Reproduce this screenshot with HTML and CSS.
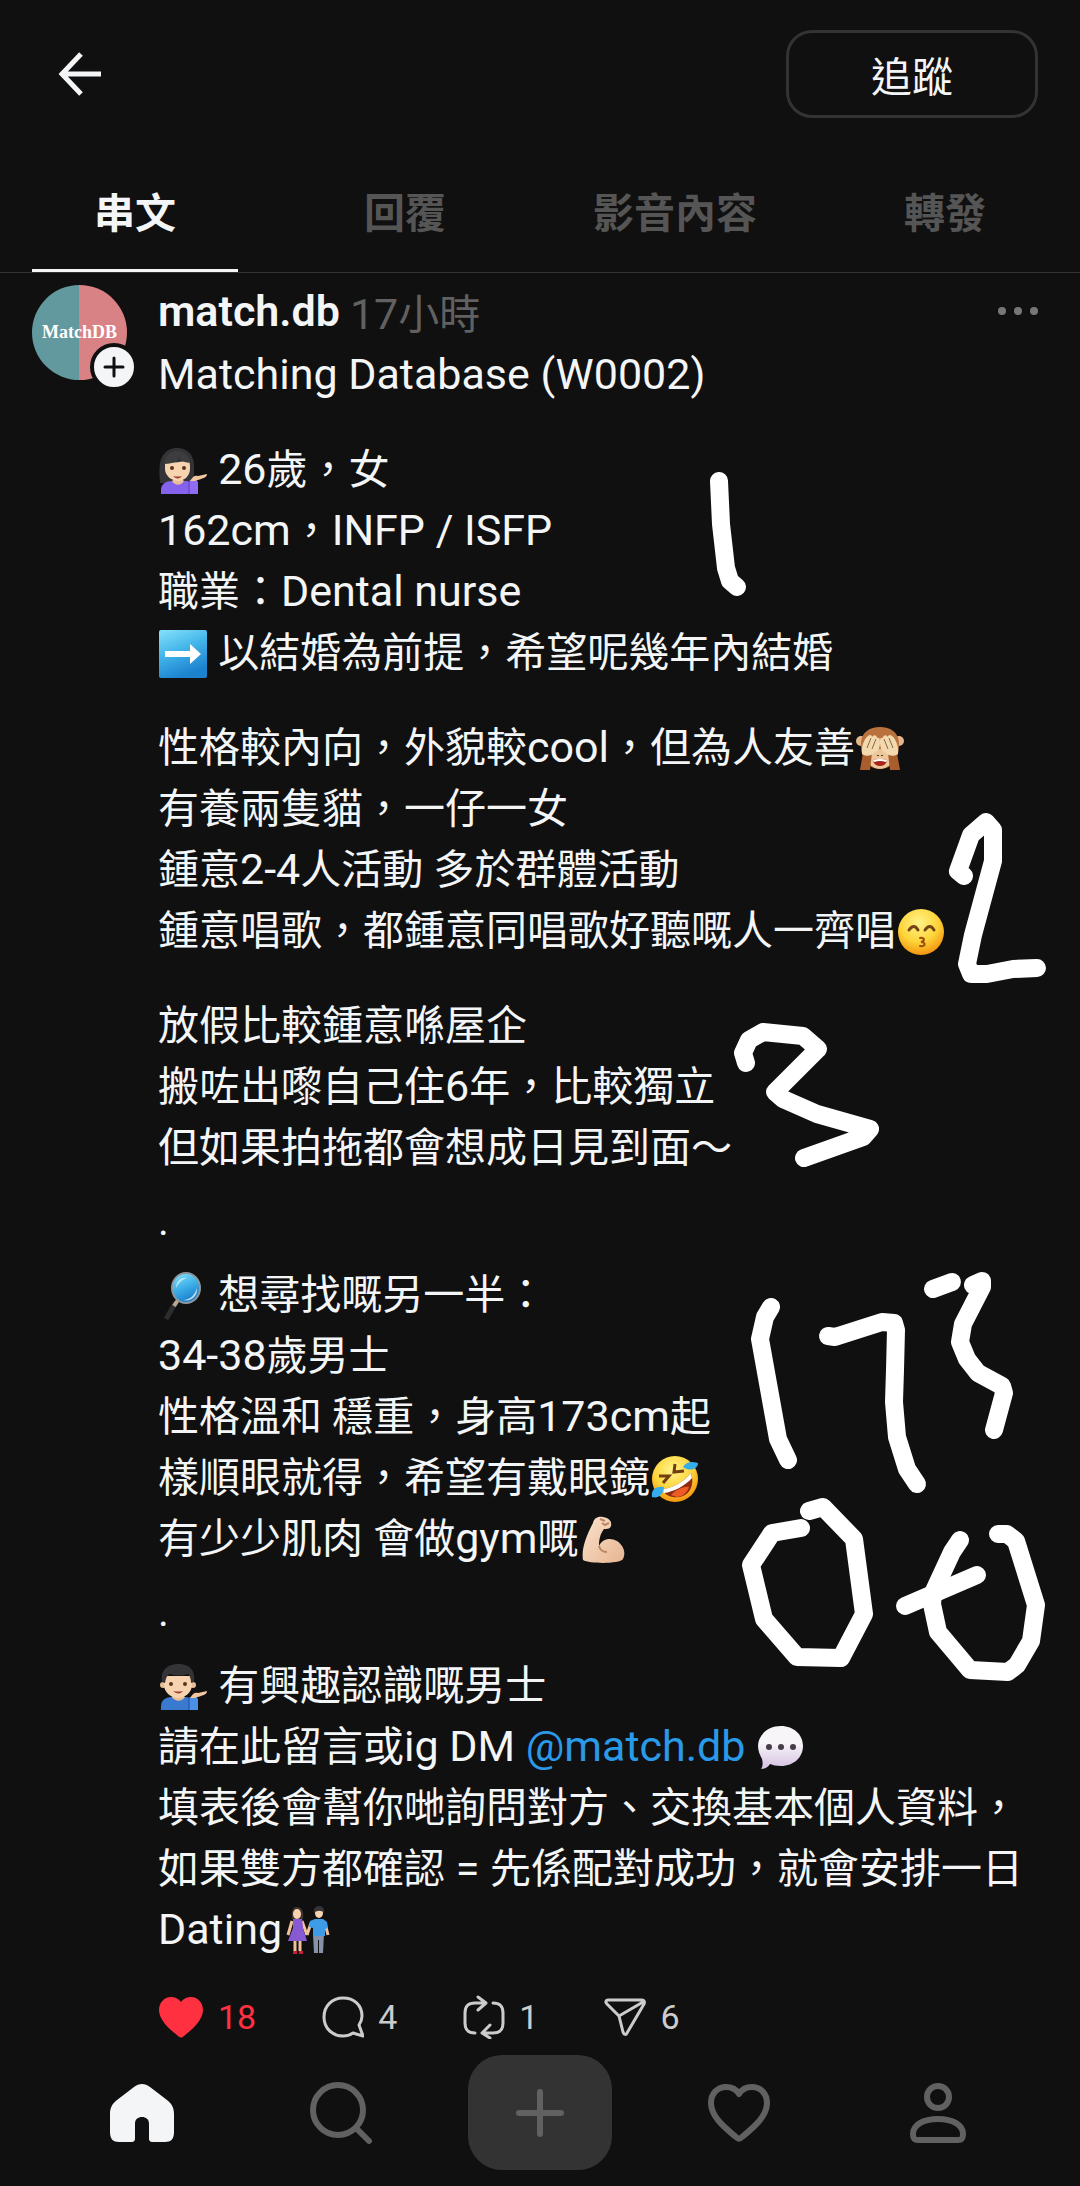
FILE: index.html
```html
<!DOCTYPE html>
<html lang="zh-Hant">
<head>
    <meta charset="UTF-8">
    <meta name="viewport" content="width=device-width, initial-scale=1.0">
    <title>match.db</title>
    <link rel="stylesheet" href="styles.css">
</head>
<body>
    <div class="page">
        <header class="top">
            <button class="back" type="button" aria-label="返回">
                <svg width="44" height="44" viewBox="0 0 44 44" fill="none" stroke="currentColor" stroke-width="5">
                    <path d="M23 2 4 22l19 20M4 22h39"/>
                </svg>
            </button>
            <button class="follow" type="button">追蹤</button>
        </header>

        <nav class="tabs">
            <a class="tab active" href="#threads">串文</a>
            <a class="tab" href="#replies">回覆</a>
            <a class="tab" href="#media">影音內容</a>
            <a class="tab" href="#reposts">轉發</a>
        </nav>

        <main class="post">
            <div class="side">
                <div class="avatar">MatchDB</div>
                <button class="add" type="button" aria-label="追蹤 match.db">
                    <svg width="22" height="22" viewBox="0 0 22 22" stroke="#101010" stroke-width="3" stroke-linecap="round">
                        <path d="M11 2v18M2 11h18"/>
                    </svg>
                </button>
            </div>

            <article class="content">
                <div class="meta">
                    <a class="name en" href="#profile">match.db</a>
                    <span class="time"><span class="en">17</span>小時</span>
                    <button class="more" type="button" aria-label="更多">
                        <svg width="40" height="10" viewBox="0 0 40 10" fill="currentColor">
                            <circle cx="4" cy="5" r="4"/>
                            <circle cx="20" cy="5" r="4"/>
                            <circle cx="36" cy="5" r="4"/>
                        </svg>
                    </button>
                </div>

                <div class="text">
                    <p><span class="en">Matching Database (W0002)</span></p>
                    <p>
                        <svg class="emoji" viewBox="0 0 50 50" role="img" aria-label="女士">
                            <path d="M2 37C1 25 1 17 4 11 8 4 13 2 19 2c10 0 17 7 17 17v18z" fill="#343436"/>
                            <path d="M15 30h10v9H15z" fill="#dfb08b"/>
                            <path d="M3 48v-4c0-6 5-9 11-9 4 3 8 3 12 0 5 0 9 2 11 5l2 8z" fill="#8462ec"/>
                            <path d="M14 35c3 5 9 5 12 0l-2-2h-8z" fill="#e9bd98"/>
                            <path d="M7 17c7 0 19-1 24-3 1 3 1 6 1 9 0 7-6 12-12 12S7 30 7 23z" fill="#f7d3b0"/>
                            <path d="M6 18C7 9 12 5 19 5s12 4 13 12c-4-1-7-1-9-3l-3-4-1 5c-4 2-8 3-13 3z" fill="#3d3d40"/>
                            <circle cx="14" cy="22" r="2" fill="#59341f"/>
                            <circle cx="26" cy="22" r="2" fill="#59341f"/>
                            <path d="M15 30q5 1 9 0-4 5-9 0z" fill="#9c3e32"/>
                            <path d="M31 48V35l6-2 3 3v12z" fill="#8f6cf4"/>
                            <path d="M31 35v13" stroke="#5c3cb5"/>
                            <path d="M32 35c3-5 5-6 8-5l9-2c0 3-3 4-6 5l-6 2z" fill="#f2c7a0"/>
                        </svg>
                        <span class="en">26</span>歲，女<br>
                        <span class="en">162cm</span>，<span class="en">INFP / ISFP</span><br>
                        職業：<span class="en">Dental nurse</span><br>
                        <svg class="emoji" viewBox="0 0 50 50" role="img" aria-label="右箭嘴">
                            <defs>
                                <linearGradient id="sky" x1="0" y1="0" x2="0.4" y2="1">
                                    <stop offset="0" stop-color="#86e2fa"/>
                                    <stop offset="0.5" stop-color="#43b5ea"/>
                                    <stop offset="1" stop-color="#1c82cf"/>
                                </linearGradient>
                            </defs>
                            <rect x="1" y="1" width="48" height="48" rx="2" fill="url(#sky)"/>
                            <path d="M7 22h25v-7l11 10-11 10v-7H7z" fill="#fff"/>
                        </svg>
                        以結婚為前提，希望呢幾年內結婚
                    </p>
                    <p>
                        性格較內向，外貌較<span class="en">cool</span>，但為人友善<svg class="emoji" viewBox="0 0 50 50" role="img" aria-label="掩眼馬騮">
                            <circle cx="6" cy="17" r="5" fill="#e5b68c"/>
                            <circle cx="44" cy="17" r="5" fill="#e5b68c"/>
                            <path d="M6 22C5 9 14 3 25 3s20 6 19 19c-1 14-8 23-19 23S7 36 6 22z" fill="#b9713d"/>
                            <ellipse cx="25" cy="35" rx="12" ry="10" fill="#ecc79b"/>
                            <path d="M18 36q7-2 14 0-1 6-7 6t-7-6z" fill="#a82318"/>
                            <path d="M18 36q7-2 14 0l-1 2q-6-2-12 0z" fill="#fff"/>
                            <path d="M23 31v1M27 31v1" stroke="#5d3418" stroke-width="2"/>
                            <path d="M5 46 8 29h9l-2 17zM45 46l-3-17h-9l2 17z" fill="#a85d2c"/>
                            <path d="M7 30C6 23 9 15 13 12c2-2 4-1 4 1 2-3 5-2 5 1 3-1 3 2 3 4 0 5-1 9-6 11-3 3-8 4-12 1zM43 30c1-7-2-15-6-18-2-2-4-1-4 1-2-3-5-2-5 1-3-1-3 2-3 4 0 5 1 9 6 11 3 3 8 4 12 1z" fill="#f2d9ae"/>
                            <path d="m16 14-4 10M21 15l-4 10M34 14l4 10M29 15l4 10" stroke="#8a6743" fill="none"/>
                        </svg><br>
                        有養兩隻貓，一仔一女<br>
                        鍾意<span class="en">2-4</span>人活動 多於群體活動<br>
                        鍾意唱歌，都鍾意同唱歌好聽嘅人一齊唱<svg class="emoji" viewBox="0 0 50 50" role="img" aria-label="錫錫">
                            <defs>
                                <radialGradient id="face" cx="0.45" cy="0.3" r="0.75">
                                    <stop offset="0" stop-color="#fff38a"/>
                                    <stop offset="0.55" stop-color="#fed53a"/>
                                    <stop offset="1" stop-color="#f28a08"/>
                                </radialGradient>
                            </defs>
                            <circle cx="25" cy="25" r="23" fill="url(#face)"/>
                            <path d="M13 23q5-7 9 0M29 23q5-7 9 0" fill="none" stroke="#754414" stroke-width="3" stroke-linecap="round"/>
                            <path d="M24 31c5-1 5 3 1 4 5 0 5 5-1 4" fill="none" stroke="#9a4a10" stroke-width="2" stroke-linecap="round"/>
                        </svg>
                    </p>
                    <p>
                        放假比較鍾意喺屋企<br>
                        搬咗出嚟自己住<span class="en">6</span>年，比較獨立<br>
                        但如果拍拖都會想成日見到面～
                    </p>
                    <p class="dot">.</p>
                    <p>
                        <svg class="emoji" viewBox="0 0 50 50" role="img" aria-label="放大鏡">
                            <path d="M8 48 18 31" stroke="#2d2d2f" stroke-width="5"/>
                            <path d="m16 35 4-6" stroke="#b9a792" stroke-width="4"/>
                            <ellipse cx="28" cy="17" rx="15" ry="16" fill="#8e979f"/>
                            <ellipse cx="28" cy="17" rx="13" ry="14" fill="url(#sky)"/>
                            <path d="M18 17c0-7 5-11 11-10-6 2-8 5-11 10z" fill="#d8f3fb" opacity="0.7"/>
                            <path d="M25 29c7 0 12-5 14-12 1 8-6 14-14 12z" fill="#c3dcec"/>
                        </svg>
                        想尋找嘅另一半：<br>
                        <span class="en">34-38</span>歲男士<br>
                        性格溫和 穩重，身高<span class="en">173cm</span>起<br>
                        樣順眼就得，希望有戴眼鏡<svg class="emoji" viewBox="0 0 50 50" role="img" aria-label="笑到碌地">
                            <circle cx="25" cy="25" r="23" fill="url(#face)"/>
                            <path d="M12 35c9 0 22-7 29-16 4 11-1 22-11 24-8 1-15-1-18-8z" fill="#8f2a12"/>
                            <path d="M12 35c9 0 22-7 29-16l1 5c-7 8-19 14-28 15z" fill="#fff"/>
                            <path d="M21 41c5-5 12-9 18-8-2 6-7 10-12 10z" fill="#ef5b25"/>
                            <path d="m9 22 10 0-6 7M25 10l-1 8 10-1" fill="none" stroke="#713e12" stroke-width="3"/>
                            <path d="M33 13c3-5 8-6 15-4 0 6-8 9-15 4zM14 33c-9-1-13 3-12 10 6 2 12-3 12-10z" fill="#35adeb"/>
                        </svg><br>
                        有少少肌肉 會做<span class="en">gym</span>嘅<svg class="emoji" viewBox="0 0 50 50" role="img" aria-label="大隻">
                            <defs>
                                <linearGradient id="skin" x1="0" y1="0" x2="1" y2="1">
                                    <stop offset="0" stop-color="#fbe3cd"/>
                                    <stop offset="1" stop-color="#e6b590"/>
                                </linearGradient>
                            </defs>
                            <path d="M5 45C3 34 9 19 15 8c1-5 5-7 10-6 7 1 9 5 8 9-1 3-4 3-7 3-4 5-5 11-5 17 3-7 11-9 18-5 7 5 9 12 6 18-3 5-33 5-40 1z" fill="url(#skin)"/>
                            <path d="M21 31c1 4 4 6 8 6M22 4l5 2M24 8l3 2 4-2" fill="none" stroke="#bd8765" stroke-width="2"/>
                        </svg>
                    </p>
                    <p class="dot">.</p>
                    <p>
                        <svg class="emoji" viewBox="0 0 50 50" role="img" aria-label="男士">
                            <path d="M14 31h12v8H14z" fill="#dfb08b"/>
                            <path d="M3 48v-4c0-6 5-9 11-9h13c6 0 9 3 10 6l2 7z" fill="#3979cf"/>
                            <path d="M14 35c3 5 10 5 13 0l-3-2h-7z" fill="#e9bd98"/>
                            <circle cx="5" cy="23" r="3" fill="#e9bd98"/>
                            <circle cx="35" cy="23" r="3" fill="#e9bd98"/>
                            <path d="M6 14h28v9c0 7-7 13-14 13S6 30 6 23z" fill="#f7d3b0"/>
                            <path d="M4 20C2 8 10 2 20 2s18 5 16 18l-3 1c0-4-1-7-3-9-6 2-12 2-18 0-3 1-4 4-5 9z" fill="#343436"/>
                            <circle cx="13" cy="22" r="2" fill="#59341f"/>
                            <circle cx="27" cy="22" r="2" fill="#59341f"/>
                            <path d="M15 29q5 1 10 0-4 5-10 0z" fill="#9c3e32"/>
                            <path d="M31 48V36l6-2 3 3v11z" fill="#4990e6"/>
                            <path d="M31 36v12" stroke="#1c4f97"/>
                            <path d="M32 36c3-5 5-6 8-5l9-2c0 3-3 4-6 5l-6 2z" fill="#f2c7a0"/>
                        </svg>
                        有興趣認識嘅男士<br>
                        請在此留言或<span class="en">ig DM <a class="mention" href="#profile">@match.db</a></span>
                        <svg class="emoji" viewBox="0 0 50 50" role="img" aria-label="對話">
                            <defs>
                                <linearGradient id="cloud" x1="0" y1="0" x2="0" y2="1">
                                    <stop offset="0.4" stop-color="#f7f5f8"/>
                                    <stop offset="1" stop-color="#d5bfe2"/>
                                </linearGradient>
                            </defs>
                            <path d="M25 3c13 0 22 9 22 20s-9 20-22 20c-5 0-8-1-11-2-2 3-5 5-9 5 2-3 2-6 1-10-2-4-4-8-4-13C2 12 12 3 25 3z" fill="url(#cloud)"/>
                            <circle cx="13" cy="24" r="3" fill="#463d49"/>
                            <circle cx="25" cy="24" r="3" fill="#463d49"/>
                            <circle cx="37" cy="24" r="3" fill="#463d49"/>
                        </svg><br>
                        填表後會幫你哋詢問對方、交換基本個人資料，<br>
                        如果雙方都確認<span class="en"> = </span>先係配對成功，就會安排一日<br>
                        <span class="en">Dating</span><svg class="emoji" viewBox="0 0 50 50" role="img" aria-label="情侶">
                            <path d="M13 33v12M18 33v12" stroke="#f0c29c" stroke-width="3"/>
                            <path d="M11 48v-3h4v3zM17 48v-3h4v3z" fill="#c51f3b"/>
                            <path d="m10 15-4 14M20 15l5 14" stroke="#f0c29c" stroke-width="3"/>
                            <path d="M11 12h9l1 10 4 13H6l5-13z" fill="#8759d2"/>
                            <path d="M10 13C9 4 11 1 15 1s7 3 6 12z" fill="#43332f"/>
                            <ellipse cx="15" cy="8" rx="4" ry="5" fill="#f7d3b0"/>
                            <path d="M31 28h11l-1 19h-4V34h-1v13h-4z" fill="#8791a8"/>
                            <path d="m29 17-4 12M43 17l3 12" stroke="#f0c29c" stroke-width="3"/>
                            <path d="m28 15 5-2h8l4 3 1 6-3 1v7H31v-8l-4-1z" fill="#3e9be8"/>
                            <ellipse cx="37" cy="7" rx="4" ry="5" fill="#f7d3b0"/>
                            <path d="M32 7c-1-5 2-7 5-7s6 2 5 7c-2-3-7-3-10 0z" fill="#343436"/>
                        </svg>
                    </p>
                </div>

                <div class="actions">
                    <button class="action liked" type="button" aria-label="讚好 18">
                        <svg width="46" height="42" viewBox="0 0 46 42" fill="currentColor">
                            <path d="M23 6C26 2 30 1 33 1c7 0 12 6 12 13 0 11-12 20-19 26-2 2-4 2-6 0C13 34 1 25 1 14 1 7 6 1 13 1c3 0 7 1 10 5z"/>
                        </svg>
                        <span>18</span>
                    </button>
                    <button class="action" type="button" aria-label="回覆 4">
                        <svg width="42" height="42" viewBox="0 0 42 42" fill="none" stroke="currentColor" stroke-width="3" stroke-linejoin="round">
                            <path d="M37 29c2-3 3-5 3-9C40 9 32 2 21 2S2 10 2 21s8 19 19 19c4 0 7-1 10-3l10 3z"/>
                        </svg>
                        <span>4</span>
                    </button>
                    <button class="action" type="button" aria-label="轉發 1">
                        <svg width="42" height="44" viewBox="0 0 42 44" fill="none" stroke="currentColor" stroke-width="3" stroke-linecap="round" stroke-linejoin="round">
                            <path d="M12 38c-7 0-10-3-10-10V18C2 11 5 8 12 8h11M15 2l8 6-8 7"/>
                            <path d="M30 8c7 0 10 3 10 10v10c0 7-3 10-10 10H19M27 30l-8 8 8 5"/>
                        </svg>
                        <span>1</span>
                    </button>
                    <button class="action" type="button" aria-label="分享 6">
                        <svg width="42" height="40" viewBox="0 0 42 40" fill="none" stroke="currentColor" stroke-width="3" stroke-linejoin="round">
                            <path d="M4 3h34c2 0 3 2 2 4L23 36c-1 2-3 2-4-1l-4-16L3 7C1 5 2 3 4 3zM15 19 39 5"/>
                        </svg>
                        <span>6</span>
                    </button>
                </div>
            </article>
        </main>

        <nav class="bottom">
            <a class="home" href="#home" aria-label="主頁">
                <svg width="64" height="60" viewBox="0 0 64 60" fill="currentColor">
                    <path d="M24 4c5-4 11-4 16 0l17 13c5 4 7 8 7 14v18c0 7-3 10-9 10H43c-3 0-4-1-4-4V41c0-5-3-7-7-7s-7 2-7 7v14c0 3-1 4-4 4H9c-6 0-9-3-9-10V31c0-6 2-10 7-14z"/>
                </svg>
            </a>
            <a href="#search" aria-label="搜尋">
                <svg width="64" height="64" viewBox="0 0 64 64" fill="none" stroke="currentColor" stroke-width="6" stroke-linecap="round">
                    <circle cx="29" cy="29" r="25"/>
                    <path d="m47 47 13 13"/>
                </svg>
            </a>
            <button class="create" type="button" aria-label="新增">
                <svg width="48" height="48" viewBox="0 0 48 48" stroke="currentColor" stroke-width="6" stroke-linecap="round">
                    <path d="M24 3v42M3 24h42"/>
                </svg>
            </button>
            <a href="#activity" aria-label="動態">
                <svg width="64" height="60" viewBox="0 0 64 60" fill="none" stroke="currentColor" stroke-width="6" stroke-linejoin="round">
                    <path d="M32 11c3-5 8-7 13-7 9 0 15 7 15 16 0 15-17 27-25 34-2 2-4 2-6 0C21 47 4 35 4 20 4 11 10 4 19 4c5 0 10 2 13 7z"/>
                </svg>
            </a>
            <a href="#me" aria-label="個人檔案">
                <svg width="58" height="62" viewBox="0 0 58 62" fill="none" stroke="currentColor" stroke-width="6">
                    <circle cx="29" cy="15" r="11"/>
                    <path d="M9 58c-4 0-5-2-5-6 0-9 10-15 25-15s25 6 25 15c0 4-1 6-5 6z"/>
                </svg>
            </a>
        </nav>

        <!-- 手寫筆記 -->
        <svg class="scribble" width="440" height="1260" viewBox="0 0 440 1260" aria-hidden="true">
            <polyline points="79,41 81,84 86,128 90,141 97,147"/>
            <polyline points="324,436 318,431 331,395 346,382 353,390 353,421 333,495 327,524 331,534 347,534 373,529 397,528"/>
            <polyline points="106,623 103,613 109,600 123,592 163,596 178,609 135,652 143,659 177,674 230,689 223,697 164,718"/>
            <polyline points="131,867 125,877 120,899 138,999 148,1020"/>
            <polyline points="188,896 195,897 220,889 242,882 254,883 256,890 255,930 254,962 257,997 267,1029 277,1044"/>
            <polyline points="293,849 312,842"/>
            <polyline points="333,845 342,841 342,847 323,884 320,902 327,919 338,933 362,946 364,953 354,990"/>
            <polyline points="169,1071 183,1067 214,1099 224,1174 201,1218 157,1217 124,1179 111,1125 132,1093 161,1088"/>
            <polyline points="320,1100 312,1112 293,1153 292,1164 298,1192 330,1230 368,1232 377,1225 391,1201 396,1165 376,1101 367,1094 358,1094"/>
            <polyline points="265,1166 337,1135"/>
        </svg>
    </div>
</body>
</html>
```
FILE: styles.css
```css
*{
    margin: 0;
    padding: 0;
    box-sizing: border-box;
}
body{
    background-color: #101010;
    color: #f3f5f7;
    font-family: Roboto, "Noto Sans CJK TC", sans-serif;
    font-size: 41px;
    line-height: 61px;
}
a{
    color: inherit;
    text-decoration: none;
}
button{
    border: none;
    background: none;
    color: inherit;
    font: inherit;
    cursor: pointer;
}
svg{
    display: block;
}
/* 英文和數字比中文大一點,行高小一點才不會撐開行 */
.en{
    font-size: 43px;
    line-height: 48px;
}
.page{
    position: relative;
}

/* 頂部 */
.top{
    display: flex;
    justify-content: space-between;
    align-items: center;
    padding: 30px 42px 0 58px;
}
.follow{
    width: 252px;
    height: 88px;
    padding-top: 8px;
    border: 3px solid #333;
    border-radius: 26px;
}

/* 分頁 */
.tabs{
    display: grid;
    grid-template-columns: repeat(4, 1fr);
    margin-top: 66px;
    border-bottom: 1px solid #333;
}
.tab{
    padding-bottom: 24px;
    margin: 0 32px;
    border-bottom: 3px solid transparent;
    color: #555;
    font-weight: bold;
    text-align: center;
    white-space: nowrap;
}
.tab.active{
    border-color: #f3f5f7;
    color: #f3f5f7;
}

/* 貼文 */
.post{
    display: flex;
    padding: 12px 42px 0 32px;
}
.side{
    position: relative;
    flex: none;
    width: 126px;
}
.avatar{
    width: 95px;
    height: 95px;
    border-radius: 50%;
    background: linear-gradient(90deg, #62999f 50%, #d98286 50%);
    color: #fff;
    font: bold 18px/95px "Liberation Serif", serif;
    text-align: center;
}
/* 頭像右下角的加號 */
.add{
    position: absolute;
    left: 58px;
    top: 58px;
    display: flex;
    justify-content: center;
    align-items: center;
    width: 48px;
    height: 48px;
    border: 4px solid #101010;
    border-radius: 50%;
    background-color: #f3f5f7;
}
.content{
    flex: 1;
    min-width: 0;
}
.meta{
    display: flex;
    align-items: center;
    height: 60px;
}
.name,
.more{
    margin-bottom: 8px;
}
.name{
    font-weight: 600;
}
.time{
    margin-left: 10px;
    color: #616161;
}
.more{
    margin-left: auto;
    color: #777;
}
.text p{
    margin-bottom: 34px;
}
.text p:last-child{
    margin-bottom: 0;
}
.text .dot{
    margin: -22px 0 13px;
}
.emoji{
    display: inline-block;
    width: 50px;
    height: 50px;
    vertical-align: -12px;
}
.mention{
    color: #2a9ae8;
}

/* 互動按鈕 */
.actions{
    display: flex;
    gap: 66px;
    height: 94px;
    padding-top: 18px;
}
.action{
    display: flex;
    align-items: center;
    gap: 14px;
    color: #ccc;
    font-size: 34px;
    line-height: 76px;
}
.liked{
    color: #ff3040;
}

/* 底部導覽 */
.bottom{
    display: grid;
    grid-template-columns: repeat(5, 1fr);
    justify-items: center;
    align-items: center;
    padding: 0 42px 16px;
    color: #616161;
}
.home{
    color: #f3f5f7;
}
.create{
    display: flex;
    justify-content: center;
    align-items: center;
    width: 144px;
    height: 115px;
    border-radius: 34px;
    background-color: #333;
}

/* 筆跡浮在貼文上面 */
.scribble{
    position: absolute;
    top: 440px;
    right: 0;
    fill: none;
    stroke: #fff;
    stroke-width: 18;
    stroke-linecap: round;
    stroke-linejoin: round;
    pointer-events: none;
}
```
